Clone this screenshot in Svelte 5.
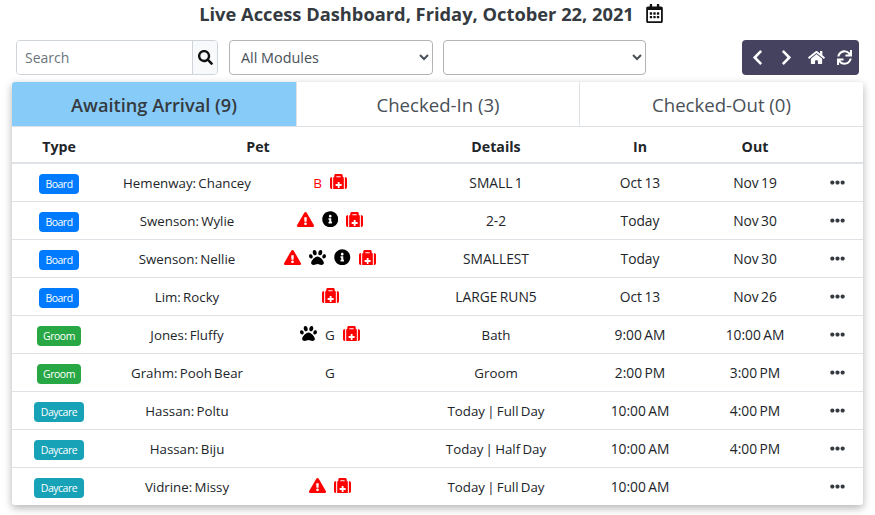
<script>
	const icons = {
		warn: { box: '0 0 576 512', d: 'M569.517 440.013C587.975 472.007 564.806 512 527.94 512H48.054c-36.937 0-59.999-40.055-41.577-71.987L246.423 23.985c18.467-32.009 64.72-31.951 83.154 0l239.94 416.028zM288 354c-25.405 0-46 20.595-46 46s20.595 46 46 46 46-20.595 46-46-20.595-46-46-46zm-43.673-165.346l7.418 136c.347 6.364 5.609 11.346 11.982 11.346h48.546c6.373 0 11.635-4.982 11.982-11.346l7.418-136c.375-6.874-5.098-12.654-11.982-12.654h-63.383c-6.884 0-12.356 5.78-11.981 12.654z' },
		info: { box: '0 0 512 512', d: 'M256 8C119.043 8 8 119.083 8 256c0 136.997 111.043 248 248 248s248-111.003 248-248C504 119.083 392.957 8 256 8zm0 110c23.196 0 42 18.804 42 42s-18.804 42-42 42-42-18.804-42-42 18.804-42 42-42zm56 254c0 6.627-5.373 12-12 12h-88c-6.627 0-12-5.373-12-12v-24c0-6.627 5.373-12 12-12h12v-64h-12c-6.627 0-12-5.373-12-12v-24c0-6.627 5.373-12 12-12h64c6.627 0 12 5.373 12 12v100h12c6.627 0 12 5.373 12 12v24z' },
		paw: { box: '0 0 512 512', d: 'M256 224c-79.41 0-192 122.76-192 200.25 0 34.9 26.81 55.75 71.74 55.75 48.84 0 81.09-25.08 120.26-25.08 39.51 0 71.85 25.08 120.26 25.08 44.93 0 71.74-20.85 71.74-55.75C448 346.76 335.41 224 256 224zm-147.28-12.61c-10.4-34.65-42.44-57.09-71.56-50.13-29.12 6.96-44.29 40.69-33.89 75.34 10.4 34.65 42.44 57.09 71.56 50.13 29.12-6.96 44.29-40.69 33.89-75.34zm84.72-20.78c30.94-8.14 46.42-49.94 34.58-93.36s-46.52-72.01-77.46-63.87-46.42 49.94-34.58 93.36c11.84 43.42 46.52 72.02 77.46 63.87zm281.39-29.34c-29.12-6.96-61.15 15.48-71.56 50.13-10.4 34.65 4.77 68.38 33.89 75.34 29.12 6.96 61.15-15.48 71.56-50.13 10.4-34.65-4.77-68.38-33.89-75.34zm-156.27 29.34c30.94 8.14 65.62-20.45 77.46-63.87 11.84-43.42-3.64-85.21-34.58-93.36s-65.62 20.45-77.46 63.87c-11.84 43.42 3.64 85.22 34.58 93.36z' },
		medkit: { box: '0 0 512 512', d: 'M96 480h320V128h-32V80c0-26.51-21.49-48-48-48H176c-26.51 0-48 21.49-48 48v48H96v352zm96-384h128v32H192V96zm160 248v32c0 6.627-5.373 12-12 12h-52v52c0 6.627-5.373 12-12 12h-32c-6.627 0-12-5.373-12-12v-52h-52c-6.627 0-12-5.373-12-12v-32c0-6.627 5.373-12 12-12h52v-52c0-6.627 5.373-12 12-12h32c6.627 0 12 5.373 12 12v52h52c6.627 0 12 5.373 12 12zM512 176v256c0 26.51-21.49 48-48 48h-16V128h16c26.51 0 48 21.49 48 48zM64 480H48c-26.51 0-48-21.49-48-48V176c0-26.51 21.49-48 48-48h16v352z' },
		search: { box: '0 0 512 512', d: 'M505 442.7L405.3 343c-4.5-4.5-10.6-7-17-7H372c27.6-35.3 44-79.7 44-128C416 93.1 322.9 0 208 0S0 93.1 0 208s93.1 208 208 208c48.3 0 92.7-16.4 128-44v16.3c0 6.4 2.5 12.5 7 17l99.7 99.7c9.4 9.4 24.6 9.4 33.9 0l28.3-28.3c9.4-9.4 9.4-24.6.1-34zM208 336c-70.7 0-128-57.2-128-128 0-70.7 57.2-128 128-128 70.7 0 128 57.2 128 128 0 70.7-57.2 128-128 128z' },
		left: { box: '0 0 320 512', d: 'M34.52 239.03L228.87 44.69c9.37-9.37 24.57-9.37 33.94 0l22.67 22.67c9.36 9.36 9.37 24.52.04 33.9L131.49 256l154.02 154.75c9.34 9.38 9.32 24.54-.04 33.9l-22.67 22.67c-9.37 9.37-24.57 9.37-33.94 0L34.52 272.97c-9.37-9.37-9.37-24.57 0-33.94z' },
		right: { box: '0 0 320 512', d: 'M285.476 272.971L91.132 467.314c-9.373 9.373-24.569 9.373-33.941 0l-22.667-22.667c-9.357-9.357-9.375-24.522-.04-33.901L188.505 256 34.484 101.255c-9.335-9.379-9.317-24.544.04-33.901l22.667-22.667c9.373-9.373 24.569-9.373 33.941 0L285.475 239.03c9.373 9.372 9.373 24.568.001 33.941z' },
		home: { box: '0 0 576 512', d: 'M280.37 148.26L96 300.11V464a16 16 0 0 0 16 16l112.06-.29a16 16 0 0 0 15.92-16V368a16 16 0 0 1 16-16h64a16 16 0 0 1 16 16v95.64a16 16 0 0 0 16 16.05L464 480a16 16 0 0 0 16-16V300L295.67 148.26a12.19 12.19 0 0 0-15.3 0zM571.6 251.47L488 182.56V44.05a12 12 0 0 0-12-12h-56a12 12 0 0 0-12 12v72.61L318.47 43a48 48 0 0 0-61 0L4.34 251.47a12 12 0 0 0-1.6 16.9l25.5 31A12 12 0 0 0 45.15 301l235.22-193.74a12.19 12.19 0 0 1 15.3 0L530.9 301a12 12 0 0 0 16.9-1.6l25.5-31a12 12 0 0 0-1.7-16.93z' },
		sync: { box: '0 0 512 512', d: 'M440.65 12.57l4 82.77A247.16 247.16 0 0 0 255.83 8C134.73 8 33.91 94.92 12.29 209.82A12 12 0 0 0 24.09 224h49.05a12 12 0 0 0 11.67-9.26 175.91 175.91 0 0 1 317-56.94l-101.46-4.86a12 12 0 0 0-12.57 12v47.41a12 12 0 0 0 12 12H500a12 12 0 0 0 12-12V12a12 12 0 0 0-12-12h-47.37a12 12 0 0 0-11.98 12.57zM255.83 432a175.61 175.61 0 0 1-146-77.8l101.8 4.87a12 12 0 0 0 12.57-12v-47.4a12 12 0 0 0-12-12H12a12 12 0 0 0-12 12V500a12 12 0 0 0 12 12h47.35a12 12 0 0 0 12-12.6l-4.15-82.57A247.17 247.17 0 0 0 255.83 504c121.11 0 221.93-86.92 243.55-201.82a12 12 0 0 0-11.8-14.18h-49.05a12 12 0 0 0-11.67 9.26A175.86 175.86 0 0 1 255.83 432z' },
		calendar: { box: '0 0 448 512', d: 'M148 288h-40c-6.6 0-12-5.4-12-12v-40c0-6.6 5.4-12 12-12h40c6.6 0 12 5.4 12 12v40c0 6.6-5.4 12-12 12zm108-12v-40c0-6.6-5.4-12-12-12h-40c-6.6 0-12 5.4-12 12v40c0 6.6 5.4 12 12 12h40c6.6 0 12-5.4 12-12zm96 0v-40c0-6.6-5.4-12-12-12h-40c-6.6 0-12 5.4-12 12v40c0 6.6 5.4 12 12 12h40c6.6 0 12-5.4 12-12zm-96 96v-40c0-6.6-5.4-12-12-12h-40c-6.6 0-12 5.4-12 12v40c0 6.6 5.4 12 12 12h40c6.6 0 12-5.4 12-12zm-96 0v-40c0-6.6-5.4-12-12-12h-40c-6.6 0-12 5.4-12 12v40c0 6.6 5.4 12 12 12h40c6.6 0 12-5.4 12-12zm192 0v-40c0-6.6-5.4-12-12-12h-40c-6.6 0-12 5.4-12 12v40c0 6.6 5.4 12 12 12h40c6.6 0 12-5.4 12-12zm96-260v352c0 26.5-21.5 48-48 48H48c-26.5 0-48-21.5-48-48V112c0-26.5 21.5-48 48-48h48V12c0-6.6 5.4-12 12-12h40c6.6 0 12 5.4 12 12v52h128V12c0-6.6 5.4-12 12-12h40c6.6 0 12 5.4 12 12v52h48c26.5 0 48 21.5 48 48zm-48 346V160H48v298c0 3.3 2.7 6 6 6h340c3.3 0 6-2.7 6-6z' },
		more: { box: '0 0 512 512', d: 'M328 256c0 39.8-32.2 72-72 72s-72-32.2-72-72 32.2-72 72-72 72 32.2 72 72zm104-72c-39.8 0-72 32.2-72 72s32.2 72 72 72 72-32.2 72-72-32.2-72-72-72zm-352 0c-39.8 0-72 32.2-72 72s32.2 72 72 72 72-32.2 72-72-32.2-72-72-72z' }
	};

	const tabs = [
		{ label: 'Awaiting Arrival', count: 9, active: true },
		{ label: 'Checked-In', count: 3 },
		{ label: 'Checked-Out', count: 0 }
	];

	const rows = [
		{ type: 'Board', pet: 'Hemenway: Chancey', flags: ['B', 'medkit'], details: 'SMALL 1', in: 'Oct 13', out: 'Nov 19' },
		{ type: 'Board', pet: 'Swenson: Wylie', flags: ['warn', 'info', 'medkit'], details: '2-2', in: 'Today', out: 'Nov 30' },
		{ type: 'Board', pet: 'Swenson: Nellie', flags: ['warn', 'paw', 'info', 'medkit'], details: 'SMALLEST', in: 'Today', out: 'Nov 30' },
		{ type: 'Board', pet: 'Lim: Rocky', flags: ['medkit'], details: 'LARGE RUN5', in: 'Oct 13', out: 'Nov 26' },
		{ type: 'Groom', pet: 'Jones: Fluffy', flags: ['paw', 'G', 'medkit'], details: 'Bath', in: '9:00 AM', out: '10:00 AM' },
		{ type: 'Groom', pet: 'Grahm: Pooh Bear', flags: ['G'], details: 'Groom', in: '2:00 PM', out: '3:00 PM' },
		{ type: 'Daycare', pet: 'Hassan: Poltu', flags: [], details: 'Today | Full Day', in: '10:00 AM', out: '4:00 PM' },
		{ type: 'Daycare', pet: 'Hassan: Biju', flags: [], details: 'Today | Half Day', in: '10:00 AM', out: '4:00 PM' },
		{ type: 'Daycare', pet: 'Vidrine: Missy', flags: ['warn', 'medkit'], details: 'Today | Full Day', in: '10:00 AM', out: '' }
	];
</script>

{#snippet icon(name, cls)}
	<svg class={cls} viewBox={icons[name].box} aria-hidden="true"><path fill="currentColor" d={icons[name].d} /></svg>
{/snippet}

<div class="page">
	<h1 class="title">
		<span>Live Access Dashboard, Friday, October 22, 2021</span>
		{@render icon('calendar', 'cal')}
	</h1>

	<div class="toolbar">
		<div class="search">
			<input type="text" placeholder="Search" />
			<button type="button" class="search-btn" aria-label="Search">{@render icon('search', 'search-icon')}</button>
		</div>
		<select class="select"><option>All Modules</option></select>
		<select class="select second"><option></option></select>
		<div class="nav">
			{@render icon('left', 'nav-chev')}
			{@render icon('right', 'nav-chev')}
			{@render icon('home', 'nav-home')}
			{@render icon('sync', 'nav-sync')}
		</div>
	</div>

	<div class="card">
		<div class="tabs">
			{#each tabs as tab}
				<div class="tab" class:active={tab.active}>{tab.label} ({tab.count})</div>
			{/each}
		</div>

		<div class="head">
			<div>Type</div>
			<div>Pet</div>
			<div>Details</div>
			<div>In</div>
			<div>Out</div>
		</div>

		{#each rows as row}
			<div class="row">
				<div><span class="badge {row.type.toLowerCase()}">{row.type}</span></div>
				<div>{row.pet}</div>
				<div class="flags">
					{#each row.flags as flag}
						{#if icons[flag]}
							{@render icon(flag, `flag ${flag}`)}
						{:else}
							<span class="letter" class:red={flag === 'B'}>{flag}</span>
						{/if}
					{/each}
				</div>
				<div class:caps={row.details === row.details.toUpperCase()}>{row.details}</div>
				<div class="time">{row.in}</div>
				<div class="time">{row.out}</div>
				<div class="more-cell">{@render icon('more', 'more')}</div>
			</div>
		{/each}
	</div>
</div>

<style>
	:global(body) {
		margin: 0;
		background: #fff;
		font-family: 'Open Sans', 'Noto Sans', sans-serif;
		color: #212529;
	}

	.page {
		width: 875px;
		height: 515px;
		overflow: hidden;
		box-sizing: border-box;
		padding-top: 1px;
	}

	.title {
		margin: 0;
		height: 25px;
		display: flex;
		justify-content: center;
		align-items: center;
		gap: 12px;
		padding-right: 13px;
		font-size: 18.3px;
		font-weight: 700;
		color: #343a40;
	}

	.cal {
		width: 17px;
		height: 19px;
		color: #111;
	}

	.toolbar {
		display: flex;
		align-items: flex-start;
		margin-top: 14px;
		padding-left: 16px;
		height: 42px;
	}

	.search {
		display: flex;
		width: 202px;
		height: 35px;
		box-sizing: border-box;
		border: 1px solid #ced4da;
		border-radius: 4px;
		overflow: hidden;
	}

	.search input {
		flex: 1;
		min-width: 0;
		border: 0;
		outline: 0;
		padding: 0 8px;
		font: inherit;
		font-size: 14px;
		background: #fff;
	}

	.search input::placeholder {
		color: #6c757d;
		opacity: 1;
	}

	.search-btn {
		width: 25px;
		padding: 0;
		border: 0;
		border-left: 1px solid #ced4da;
		background: #f8f9fa;
		display: flex;
		align-items: center;
		justify-content: center;
	}

	.search-icon {
		width: 15px;
		height: 15px;
		color: #111;
	}

	.select {
		width: 204px;
		height: 35px;
		margin-left: 11px;
		box-sizing: border-box;
		border: 1px solid #b4b4b4;
		border-radius: 4px;
		background: #fff;
		color: #495057;
		font: inherit;
		font-size: 14.4px;
		padding: 0 7px;
	}

	.second {
		margin-left: 10px;
		width: 203px;
	}

	.nav {
		margin-left: 96px;
		width: 117px;
		height: 35px;
		box-sizing: border-box;
		background: #44425e;
		border-radius: 4px;
		color: #fff;
		display: flex;
		align-items: center;
		padding-left: 10px;
	}

	.nav-chev {
		width: 11px;
		height: 17px;
		margin-right: 18px;
	}

	.nav-home {
		width: 17px;
		height: 15px;
		margin-left: -2px;
		margin-right: 12px;
	}

	.nav-sync {
		width: 15px;
		height: 15px;
	}

	.card {
		margin: 0 12px;
		background: #fff;
		border-radius: 3px;
		box-shadow: 0 3px 9px rgba(0, 0, 0, 0.3);
		font-size: 13.3px;
		word-spacing: -1.2px;
	}

	.tabs {
		display: grid;
		grid-template-columns: 284px 283px 284px;
		height: 45px;
		border-bottom: 1px solid #dee2e6;
		box-sizing: border-box;
		word-spacing: 0;
	}

	.tab {
		display: flex;
		align-items: center;
		justify-content: center;
		padding-top: 1px;
		box-sizing: border-box;
		font-size: 18.6px;
		color: #495057;
		border-left: 1px solid #dee2e6;
	}

	.tab:first-child {
		border-left: 0;
	}

	.tab.active {
		background: #87cbf9;
		border-top-left-radius: 3px;
		color: #343a40;
		font-size: 18.2px;
		font-weight: 600;
	}

	.head {
		display: grid;
		grid-template-columns: 94px 304px 172px 116px 114px;
		height: 37px;
		padding-top: 4px;
		align-items: center;
		text-align: center;
		font-size: 14.2px;
		word-spacing: 0;
		font-weight: 700;
		border-bottom: 2px solid #dee2e6;
		box-sizing: border-box;
	}

	.row {
		display: grid;
		grid-template-columns: 94px 162px 126px 204px 84px 146px 18px;
		height: 38px;
		align-items: center;
		text-align: center;
		border-bottom: 1px solid #dee2e6;
		box-sizing: border-box;
	}

	.row:last-child {
		height: 37px;
		border-bottom: 0;
	}

	.caps {
		font-size: 13.8px;
	}

	.time {
		font-size: 13.8px;
	}

	.badge {
		display: inline-block;
		position: relative;
		top: 1px;
		padding: 0 6.5px;
		height: 20px;
		line-height: 20px;
		border-radius: 4px;
		color: #fff;
		font-size: 10.5px;
		letter-spacing: -0.5px;
		vertical-align: middle;
	}

	.board {
		background: #007bff;
	}

	.groom {
		background: #28a745;
	}

	.daycare {
		background: #17a2b8;
	}

	.flags {
		display: flex;
		justify-content: center;
		align-items: center;
		gap: 8px;
		padding-right: 2px;
	}

	.flag {
		width: 17px;
		height: 17px;
		flex: none;
		margin-bottom: 3px;
		color: #000;
	}

	.flag.info {
		width: 16.5px;
		height: 16.5px;
	}

	.flag.warn,
	.flag.medkit {
		color: #f00;
	}

	.letter {
		font-size: 13.5px;
	}

	.letter.red {
		color: #f00;
	}

	.more-cell {
		display: flex;
		justify-content: center;
	}

	.more {
		width: 15px;
		height: 15px;
		color: #343a40;
	}
</style>
